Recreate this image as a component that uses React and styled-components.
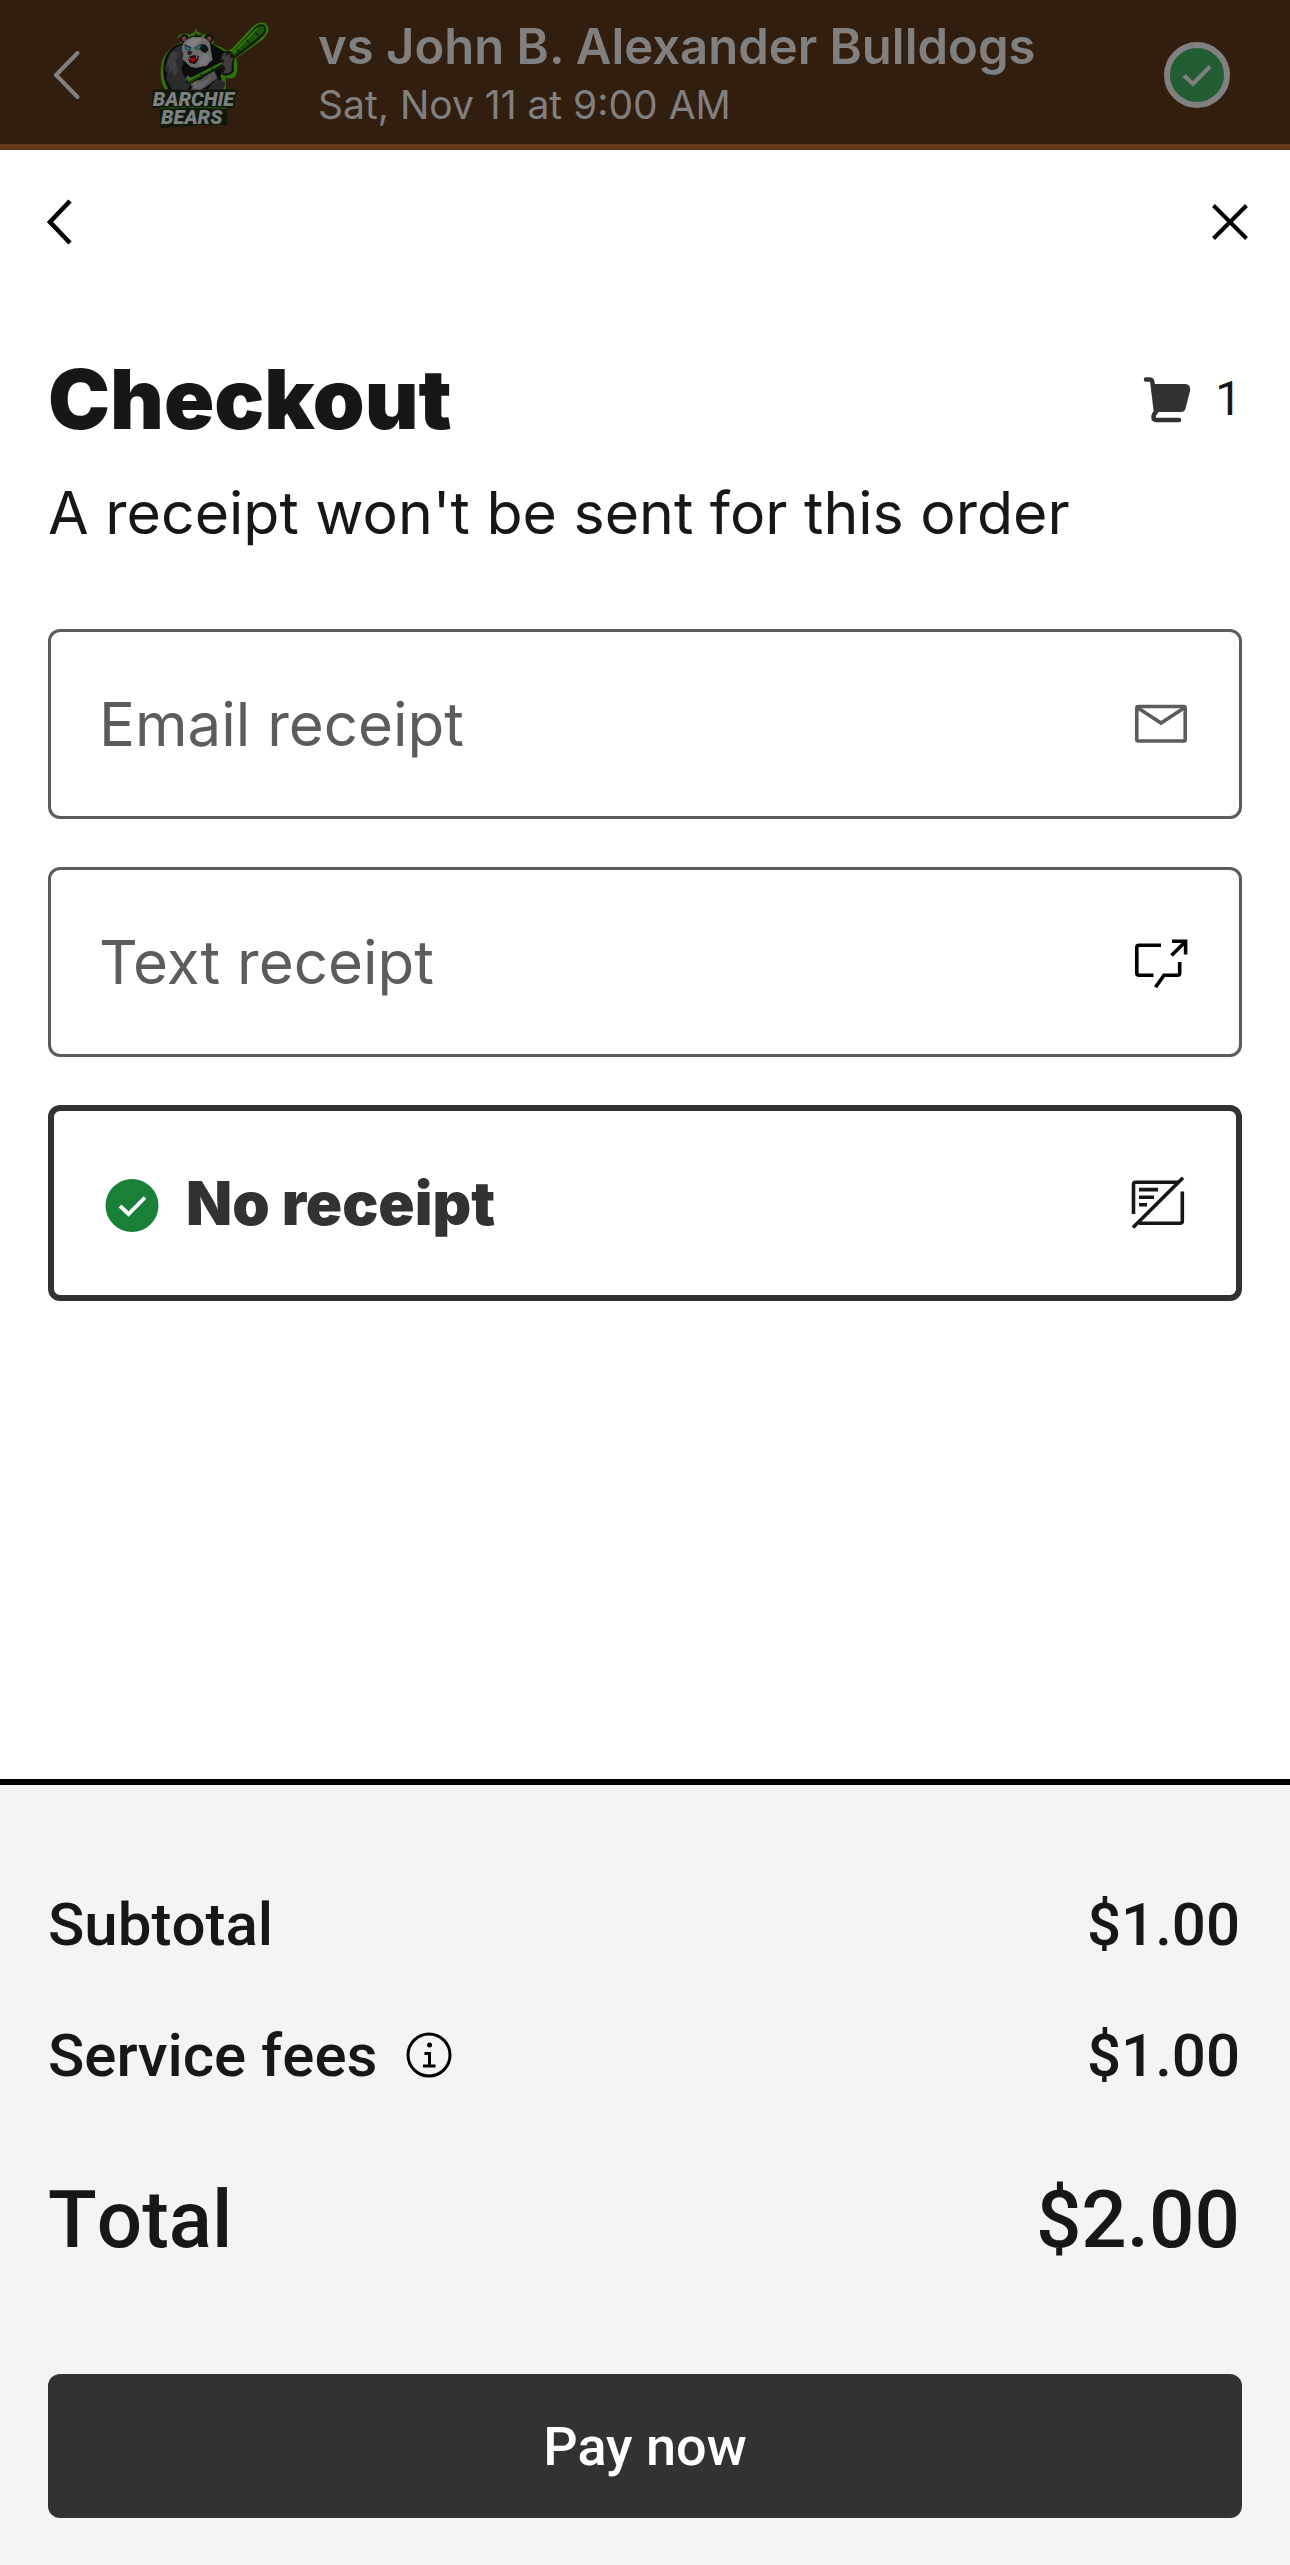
import React, { useState } from "react";
import styled, { createGlobalStyle } from "styled-components";

const display = `Inter, "Noto Sans", sans-serif`;
const body = `Roboto, "Liberation Sans", sans-serif`;

const GlobalStyle = createGlobalStyle`
  *, *::before, *::after { box-sizing: border-box; }
  body { margin: 0; background: #fff; color: #171717; font-family: ${body}; }
  button { font: inherit; color: inherit; background: none; border: 0; padding: 0; cursor: pointer; }
  h1, h2, p, dl, dt, dd, fieldset { margin: 0; padding: 0; border: 0; }
  svg { display: block; flex: none; }
`;

const Page = styled.div`
  display: flex;
  flex-direction: column;
  min-height: 100vh;
`;

const GameHeader = styled.header`
  display: flex;
  align-items: center;
  min-height: 150px;
  padding: 0 60px 0 48px;
  background: #321e0f;
  box-shadow: inset 0 -6px #653b1b;
  color: #808080;
  font-family: ${display};
`;

const IconButton = styled.button`
  display: flex;
  align-items: center;
  justify-content: center;
  width: ${(p) => p.$size}px;
  height: ${(p) => p.$size}px;
`;

const LogoSlot = styled.div`
  margin: 0 48px 0 66px;
`;

const GameInfo = styled.div`
  flex: 1;
  min-width: 0;
`;

const GameTitle = styled.h2`
  font-size: 49px;
  line-height: 60px;
  font-weight: 600;
`;

const GameDate = styled.p`
  font-size: 39px;
  line-height: 56px;
`;

const Nav = styled.nav`
  display: flex;
  align-items: center;
  justify-content: space-between;
  height: 144px;
  padding: 0 30px;
  color: #000;
`;

const Main = styled.main`
  padding: 57px 48px 96px;
`;

const HeadingRow = styled.div`
  display: flex;
  align-items: center;
  justify-content: space-between;
`;

const Heading = styled.h1`
  font-family: ${display};
  font-size: 83px;
  line-height: 96px;
  font-weight: 900;
`;

const CartCount = styled.div`
  display: flex;
  align-items: center;
  gap: 24px;
  font-size: 48px;
  line-height: 60px;
`;

const Notice = styled.p`
  margin: 30px 0 80px;
  font-family: ${display};
  font-size: 59px;
  line-height: 72px;
`;

const Options = styled.fieldset`
  display: flex;
  flex-direction: column;
  gap: 48px;
  min-width: 0;
`;

const Option = styled.label`
  display: flex;
  align-items: center;
  gap: 24px;
  min-height: ${(p) => (p.$selected ? 196 : 190)}px;
  padding: 0 48px;
  border: ${(p) => (p.$selected ? "6px solid #323232" : "3px solid #5c5c5c")};
  border-radius: 12px;
  color: ${(p) => (p.$selected ? "#323232" : "#5c5c5c")};
  font-family: ${display};
  font-size: 60px;
  line-height: 72px;
  font-weight: ${(p) => (p.$selected ? 900 : 400)};
  cursor: pointer;
`;

const OptionName = styled.span`
  flex: 1;
`;

const Radio = styled.input`
  appearance: none;
  position: absolute;
  width: 1px;
  height: 1px;
  margin: 0;
  opacity: 0;
`;

const Summary = styled.footer`
  margin-top: auto;
  padding: 104px 48px 47px;
  border-top: 6px solid #000;
  background: #f4f4f4;
`;

const Charges = styled.dl`
  display: flex;
  flex-direction: column;
  gap: 59px;
  padding-right: 2px;
  font-kerning: none;
`;

const Charge = styled.div`
  display: flex;
  align-items: center;
  justify-content: space-between;
  padding-top: ${(p) => (p.$total ? 21 : 0)}px;
  font-size: ${(p) => (p.$total ? 80 : 60)}px;
  line-height: ${(p) => (p.$total ? 96 : 72)}px;
  font-weight: 500;
`;

const ChargeName = styled.dt`
  display: flex;
  align-items: center;
  gap: 22px;
`;

const PayButton = styled.button`
  width: 100%;
  height: 144px;
  margin-top: 106px;
  border-radius: 12px;
  background: #323232;
  color: #fff;
  font-size: 54px;
  font-weight: 500;
`;

const Chevron = () => (
  <svg width="60" height="60" viewBox="0 0 60 60" fill="none" stroke="currentColor" strokeWidth="4.600" aria-hidden="true">
    <path d="M40 9 20 30 40 51" />
  </svg>
);

const HeaderChevron = () => (
  <svg width="36" height="60" viewBox="0 0 36 60" fill="none" stroke="currentColor" strokeWidth="4" aria-hidden="true">
    <path d="M29.500 8 8 30 29.500 52" strokeLinecap="round" />
  </svg>
);

const Close = () => (
  <svg width="60" height="60" viewBox="0 0 60 60" fill="none" stroke="currentColor" strokeWidth="4" aria-hidden="true">
    <path d="M13.500 13.500 46.500 46.500M46.500 13.500 13.500 46.500" />
  </svg>
);

const Confirmed = () => (
  <svg width="66" height="66" viewBox="0 0 66 66" aria-label="Confirmed" role="img">
    <circle cx="33" cy="33" r="30" fill="#225c32" stroke="#808080" strokeWidth="6" />
    <path d="M20 33.500 29 42 46 24.500" fill="none" stroke="#808080" strokeWidth="4" />
  </svg>
);

const Selected = () => (
  <svg width="60" height="60" viewBox="0 0 60 60" aria-hidden="true">
    <circle cx="30" cy="32.500" r="26.500" fill="#1a8038" />
    <path d="M18 33 26.500 41 43 24.500" fill="none" stroke="#fff" strokeWidth="3.800" />
  </svg>
);

const Cart = () => (
  <svg width="48" height="48" viewBox="0 0 48 48" aria-hidden="true">
    <path
      d="M3 4.500H6.500Q9 4.500 9.400 7.500L13 37Q10.500 39 10.500 42.500Q10.500 45 14 45H36"
      fill="none" stroke="#323232" strokeWidth="4.500" strokeLinecap="round" strokeLinejoin="round"
    />
    <path d="M9 9H42Q48 9 47 16L42.500 33.500Q41.500 37 38 37H13Z" fill="#323232" />
  </svg>
);

const Mail = () => (
  <svg width="60" height="60" viewBox="0 0 60 60" fill="none" stroke="#5c5c5c" strokeWidth="3.600" aria-hidden="true">
    <rect x="5.800" y="12.500" width="48.400" height="34.500" rx="1.500" />
    <path d="M7 14 30 29 53 14" />
  </svg>
);

const TextMessage = () => (
  <svg width="60" height="60" viewBox="0 0 60 60" fill="none" stroke="#000" strokeWidth="3.600" aria-hidden="true">
    <path d="M30 13.300H8Q5.800 13.300 5.800 15.500V41Q5.800 43.200 8 43.200H22.500" />
    <path d="M24.500 55.200 33 43.200H46.500Q48.700 43.200 48.700 41V30" />
    <path d="M41 9.300H54.600V22.500M54 10 40.500 23.500" />
  </svg>
);

const NoReceipt = () => (
  <svg width="60" height="60" viewBox="0 0 60 60" fill="none" stroke="#171717" strokeWidth="3.600" aria-hidden="true">
    <path d="M5.500 41V11.500Q5.500 9.300 7.700 9.300H50" />
    <path d="M54.300 18.500V48Q54.300 50.200 52.100 50.200H11" />
    <path d="M5 54.500 55 4.800M11 16.600H30M11 24.200H26M11 31.800H19" />
  </svg>
);

const Info = () => (
  <svg width="60" height="60" viewBox="0 0 60 60" fill="none" stroke="#000" strokeWidth="3" aria-hidden="true">
    <circle cx="30" cy="29" r="21" />
    <path d="M25.500 27.500H30.500V40M24 40H36.500" />
    <circle cx="30.500" cy="19" r="2.500" fill="#000" stroke="none" />
  </svg>
);

const Lettering = styled.text`
  font-family: ${body};
  font-weight: 900;
  font-style: italic;
  fill: #7c807e;
  stroke: #10180c;
  stroke-width: 8px;
  paint-order: stroke;
  stroke-linejoin: round;
`;

const TeamLogo = () => (
  <svg width="120" height="110" viewBox="60 30 360 330" role="img" aria-label="Barchie Bears">
    <path
      d="M154 97 152 82 139 84 151 73Q162 68 179 74L195 66 195 54 203 66 214 69 211 76Q236 66 248 82Q256 92 248 102L272 111 290 122 304 118 370 48Q390 33 405 40Q420 50 413 70L400 87 318 145Q328 175 316 200Q304 208 286 203L288 238H104Q87 205 94 166Q98 124 154 97Z"
      fill="#2f7705"
    />
    <path d="M160 98Q110 110 101 160Q95 207 116 239H270Q280 218 272 198L290 128 250 104 205 74 180 80Z" fill="#0c0c0d" />
    <path d="M156 104Q116 118 108 161L103 180 111 187 110 211 126 238 173 239 184 220Q161 204 154 176L162 150Z" fill="#2b2a2d" />
    <path d="M126 125Q111 147 110 174L118 165 116 191 127 180 130 200 145 183 137 155 146 127Z" fill="#3d3b3e" />
    <path d="M172 196Q190 210 210 210L252 180 262 204Q240 224 214 239H184Q192 224 166 212Z" fill="#555356" />
    <path d="M187 212 213 219 245 201 225 226 208 239 193 235Z" fill="#747274" opacity=".6" />
    <path d="M259 207 283 213Q288 227 279 238H233Z" fill="#2b2a2d" />
    <circle cx="163" cy="86" r="13" fill="#101011" />
    <circle cx="162" cy="86" r="7" fill="#6b3d43" />
    <circle cx="237" cy="85" r="14" fill="#101011" />
    <circle cx="238" cy="86" r="7" fill="#6b3d43" />
    <path d="M168 90Q188 76 208 79 230 84 240 100L244 128 248 150 238 158 230 168 214 170 198 174 182 170 170 160 158 148 160 132 155 116Q158 98 168 90Z" fill="#6c6c6d" />
    <path d="M172 92Q194 80 216 88L204 100 192 112 186 112 168 102Z" fill="#808081" />
    <path d="M212 138 232 130 240 148 226 162 206 168Z" fill="#7a7a7b" />
    <path d="M190 81 197 68 203 76 215 73 211 82Z" fill="#1c1c1d" />
    <path d="M208 114 218 102Q232 104 236 120L226 130 214 124Z" fill="#131316" />
    <path d="M164 103 183 112 180 122 166 118Z" fill="#1b1b1e" />
    <path d="M194 113 217 101Q216 117 200 120Z" fill="#1b1b1e" />
    <path d="M166 107 181 115 176 120 168 116ZM196 114 213 106Q211 116 201 118Z" fill="#0a9092" />
    <path d="M171 126Q179 119 187 126L184 134 175 136Z" fill="#242126" />
    <path d="M173 142 190 136 206 138Q204 158 193 162L179 158Z" fill="#17090b" />
    <path d="M180 146Q190 137 199 146L194 156 182 156Z" fill="#96060d" />
    <path d="M174 142 180 143 178 149ZM198 139 203 140 199 146Z" fill="#aaaaa5" />
    <path d="M166 212 273 153Q290 138 309 124L369 59Q385 39 402 44Q413 53 405 72L383 93 317 143Q296 160 276 171L181 222Q169 224 166 212Z" fill="#10190a" />
    <path d="M171 211 277 156 318 118 373 60Q388 45 400 49Q408 57 399 69L379 87 313 138 269 167 179 218Q172 218 171 211Z" fill="#1c5205" />
    <path d="M175 210 278 158 319 119 382 55" fill="none" stroke="#347a10" strokeWidth="5" />
    <path d="M211 193 219 201M245 174 252 184M321 118 331 129M349 89 360 101M375 65 386 78" stroke="#0d2704" strokeWidth="4" />
    <path d="M277 130Q287 119 300 124Q318 132 311 163L312 184Q299 201 278 196L266 178 281 165 269 151Z" fill="#151516" />
    <path d="M278 132 290 127 287 139 301 130 300 145 310 142 305 159 305 182Q293 193 280 190L287 175 276 161 285 151 275 147Z" fill="#3f3d40" />
    <path d="M69 238 190 242 314 236 315 292 293 296 292 347Q238 339 190 347L91 354 89 296 66 292Z" fill="#10180c" />
    <path d="M88 296Q190 286 292 296" fill="none" stroke="#24510d" strokeWidth="4" />
    <Lettering fontSize="60">
      <tspan x="68" y="288">BARCHIE</tspan>
      <tspan x="93" y="343">BEARS</tspan>
    </Lettering>
  </svg>
);

const receiptOptions = [
  { id: "email", name: "Email receipt", Icon: Mail },
  { id: "text", name: "Text receipt", Icon: TextMessage },
  { id: "none", name: "No receipt", Icon: NoReceipt },
];

export default function App() {
  const [receipt, setReceipt] = useState("none");
  return (
    <>
      <GlobalStyle />
      <Page>
        <GameHeader>
          <IconButton $size={36} aria-label="Back to game"><HeaderChevron /></IconButton>
          <LogoSlot><TeamLogo /></LogoSlot>
          <GameInfo>
            <GameTitle>vs John B. Alexander Bulldogs</GameTitle>
            <GameDate>Sat, Nov 11 at 9:00 AM</GameDate>
          </GameInfo>
          <Confirmed />
        </GameHeader>
        <Nav aria-label="Checkout navigation">
          <IconButton $size={60} aria-label="Back"><Chevron /></IconButton>
          <IconButton $size={60} aria-label="Close"><Close /></IconButton>
        </Nav>
        <Main>
          <HeadingRow>
            <Heading>Checkout</Heading>
            <CartCount><Cart />1</CartCount>
          </HeadingRow>
          <Notice>A receipt won't be sent for this order</Notice>
          <Options aria-label="Receipt">
            {receiptOptions.map(({ id, name, Icon }) => (
              <Option key={id} $selected={receipt === id}>
                <Radio type="radio" name="receipt" value={id} checked={receipt === id} onChange={() => setReceipt(id)} />
                {receipt === id && <Selected />}
                <OptionName>{name}</OptionName>
                <Icon />
              </Option>
            ))}
          </Options>
        </Main>
        <Summary>
          <Charges>
            <Charge><ChargeName>Subtotal</ChargeName><dd>$1.00</dd></Charge>
            <Charge>
              <ChargeName>
                Service fees
                <IconButton $size={60} aria-label="About service fees"><Info /></IconButton>
              </ChargeName>
              <dd>$1.00</dd>
            </Charge>
            <Charge $total><ChargeName>Total</ChargeName><dd>$2.00</dd></Charge>
          </Charges>
          <PayButton type="button">Pay now</PayButton>
        </Summary>
      </Page>
    </>
  );
}
